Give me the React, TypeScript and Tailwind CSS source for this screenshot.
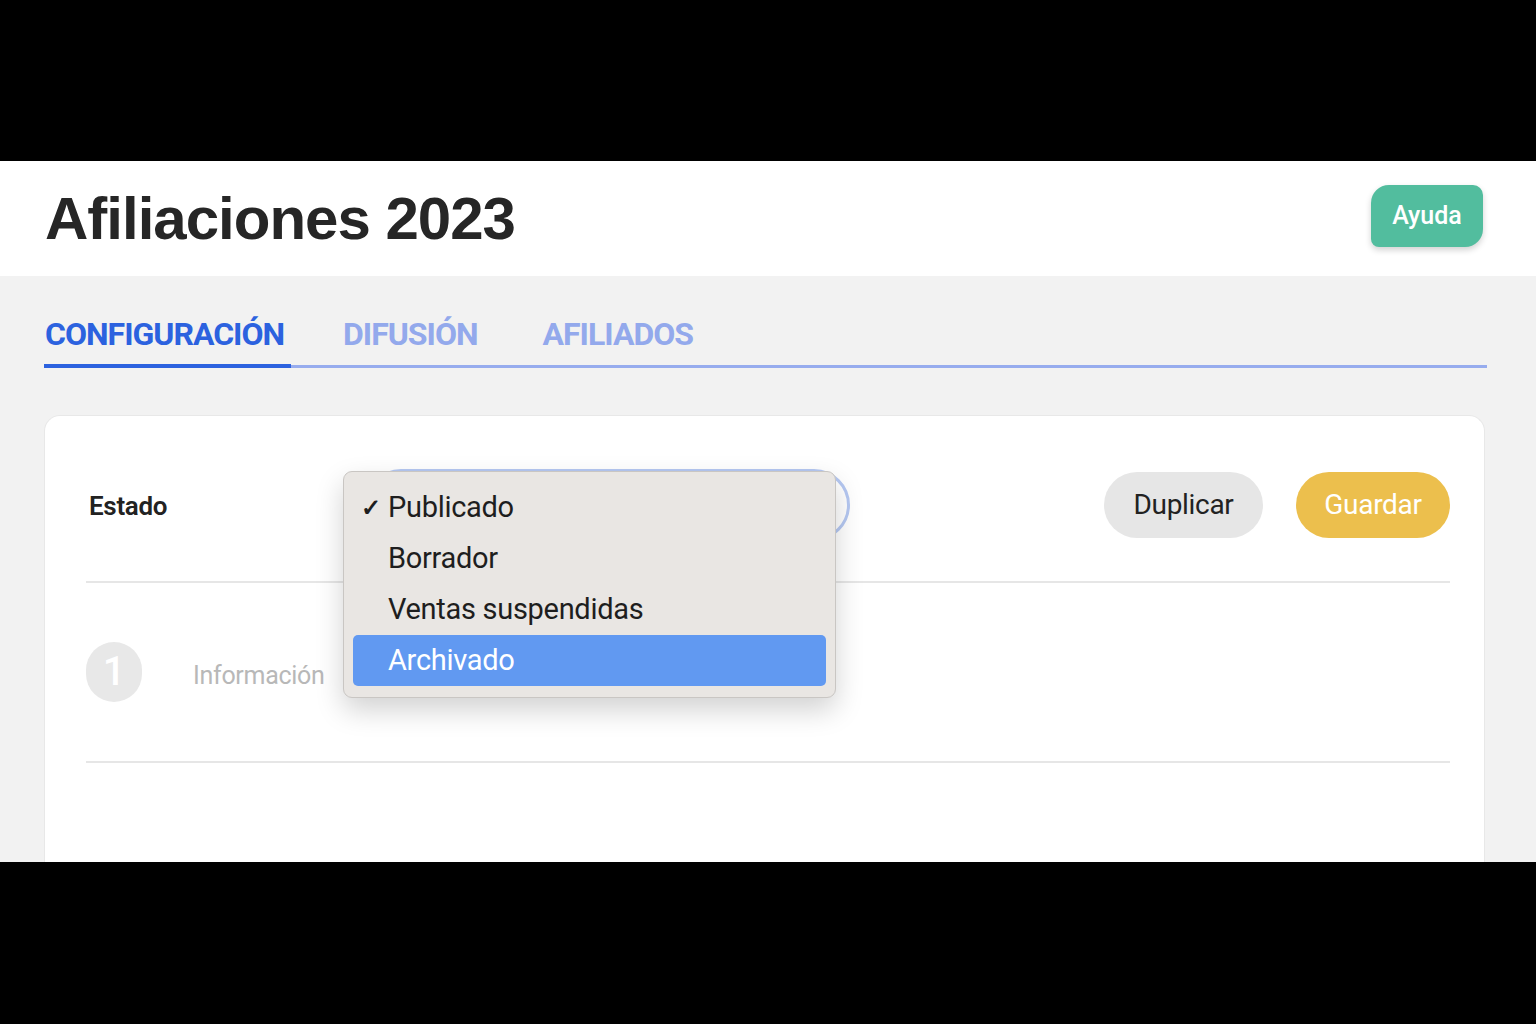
import React from "react";

export default function App() {
  const roboto = { fontFamily: "Roboto, 'Noto Sans', sans-serif" } as React.CSSProperties;
  return (
    <div className="w-full h-[1024px] bg-black flex flex-col overflow-hidden" style={roboto}>
      <div className="h-[161px] shrink-0 bg-black" />
      <div className="h-[701px] shrink-0 flex flex-col overflow-hidden">
        <header className="h-[115px] shrink-0 bg-white flex items-center justify-between pl-[45px] pr-[53px]">
          <h1
            className="text-[60px] font-bold tracking-[-1px] text-[#262626] leading-none"
            style={{ fontFamily: "'Liberation Sans', Arial, sans-serif" }}
          >
            Afiliaciones 2023
          </h1>
          <button className="-mt-[6px] w-[112px] h-[62px] bg-[#52bd9e] text-white text-[25px] font-medium rounded-tl-[18px] rounded-br-[18px] rounded-tr-[10px] rounded-bl-[8px] shadow-[0_3px_6px_rgba(0,0,0,0.18)] flex items-center justify-center">
            Ayuda
          </button>
        </header>
        <main className="flex-1 bg-[#f2f2f2] pl-[44px] pr-[49px] pt-[40px] flex flex-col">
          <div className="flex items-end border-b-[3px] border-[#97acee] h-[52px]">
            <div className="w-[247px] h-[55px] -mb-[3px] border-b-4 border-[#2c62df] flex items-start pt-[3px]">
              <span className="text-[32px] font-bold tracking-[-1px] leading-[36px] text-[#2c62df] pl-px">CONFIGURACIÓN</span>
            </div>
            <div className="ml-[52px] h-[55px] -mb-[3px] flex items-start pt-[3px]">
              <span className="text-[32px] font-bold tracking-[-1px] leading-[36px] text-[#93a9ec]">DIFUSIÓN</span>
            </div>
            <div className="ml-[65px] h-[55px] -mb-[3px] flex items-start pt-[3px]">
              <span className="text-[32px] font-bold tracking-[-1px] leading-[36px] text-[#93a9ec]">AFILIADOS</span>
            </div>
          </div>

          <div className="mt-[47px] mr-[2px] flex-1 bg-white rounded-t-[16px] border border-[#e8e8e8] border-b-0 pl-[41px] pr-[34px] pt-[56px]">
            {/* Row 1 */}
            <div className="flex items-center h-[66px]">
              <div className="w-[279px] pl-[3px] pt-[3px] text-[26px] font-semibold text-[#222] tracking-[-0.3px]">Estado</div>
              <div className="relative w-[485px] h-[72px]">
                <div className="absolute inset-0 rounded-[36px] border-[3px] border-[#b5c8f2] bg-white flex items-center justify-end pr-[12px]">
                  <svg width="12" height="10" viewBox="0 0 12 10" className="text-[#444]">
                    <path d="M1 2 L6 8 L11 2" fill="none" stroke="currentColor" strokeWidth="1.8" strokeLinecap="round" />
                  </svg>
                </div>
                <div className="absolute left-[-22px] top-[2px] w-[493px] h-[227px] bg-[#e9e6e3] border border-[#c9c6c3] rounded-[9px] shadow-[0_12px_28px_rgba(0,0,0,0.18)] py-[10px] px-[9px] flex flex-col z-10">
                  <div className="h-[51px] flex items-center text-[29px] text-[#1e1e1e] tracking-[-0.3px]">
                    <span className="w-[35px] pl-[8px] text-[24px] font-bold">✓</span>
                    <span>Publicado</span>
                  </div>
                  <div className="h-[51px] flex items-center text-[29px] text-[#1e1e1e] tracking-[-0.3px]">
                    <span className="w-[35px]" />
                    <span>Borrador</span>
                  </div>
                  <div className="h-[51px] flex items-center text-[29px] text-[#1e1e1e] tracking-[-0.3px]">
                    <span className="w-[35px]" />
                    <span>Ventas suspendidas</span>
                  </div>
                  <div className="h-[51px] flex items-center text-[29px] text-white bg-[#6199f1] rounded-[5px] tracking-[-0.3px]">
                    <span className="w-[35px]" />
                    <span>Archivado</span>
                  </div>
                </div>
              </div>
              <div className="flex-1" />
              <button className="w-[159px] h-[66px] rounded-full bg-[#e6e6e6] text-[28px] text-[#222] flex items-center justify-center tracking-[-0.3px]">
                Duplicar
              </button>
              <button className="ml-[33px] w-[154px] h-[66px] rounded-full bg-[#ecbf4d] text-[28px] text-white flex items-center justify-center tracking-[-0.3px]">
                Guardar
              </button>
            </div>
            <div className="mt-[43px] border-t-2 border-[#e6e6e6]" />
            {/* Row 2 */}
            <div className="h-[178px] flex items-center">
              <div className="w-[56px] h-[60px] rounded-full bg-[#e8e8e8] text-white text-[40px] font-medium flex items-center justify-center">
                1
              </div>
              <div className="ml-[51px] mt-[8px] text-[25px] text-[#b8b8b8] tracking-[-0.3px]">Información</div>
            </div>
            <div className="border-t-2 border-[#e6e6e6]" />
          </div>
        </main>
      </div>
      <div className="h-[162px] shrink-0 bg-black" />
    </div>
  );
}
